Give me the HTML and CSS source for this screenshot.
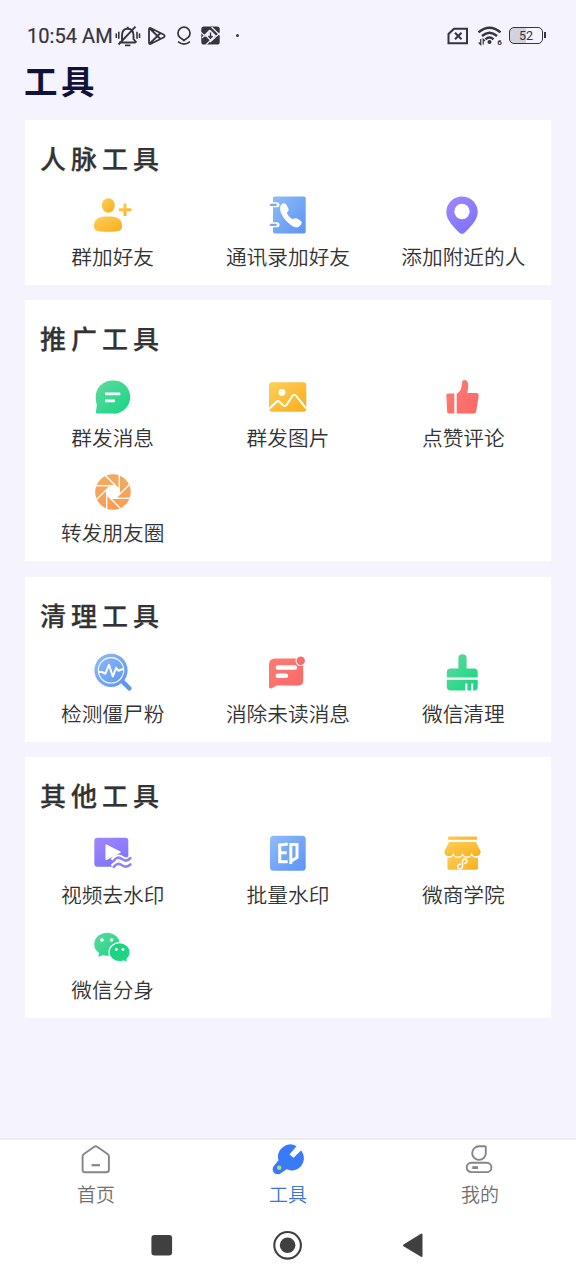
FILE: index.html
```html
<!DOCTYPE html>
<html lang="zh-CN">
<head>
<meta charset="utf-8">
<title>工具</title>
<link rel="stylesheet" href="styles.css">
</head>
<body>
<svg class="defs" width="0" height="0" aria-hidden="true">
  <defs>
    <linearGradient id="yellow" x1="0" y1="0" x2="1" y2="1"><stop offset="0" stop-color="#fdcf59"/><stop offset="1" stop-color="#f9ae1c"/></linearGradient>
    <linearGradient id="blue" x1="0" y1="0" x2="1" y2="1"><stop offset="0" stop-color="#8fbcf9"/><stop offset="1" stop-color="#5c93f5"/></linearGradient>
    <linearGradient id="purple" x1="0" y1="0" x2=".6" y2="1"><stop offset="0" stop-color="#a387fa"/><stop offset="1" stop-color="#7f74fb"/></linearGradient>
    <linearGradient id="green" x1="0" y1="0" x2="1" y2="1"><stop offset="0" stop-color="#62d8a0"/><stop offset="1" stop-color="#14d680"/></linearGradient>
    <linearGradient id="red" x1="0" y1="0" x2="1" y2="1"><stop offset="0" stop-color="#fb7d73"/><stop offset="1" stop-color="#fb6866"/></linearGradient>
    <linearGradient id="orange" x1="0" y1="0" x2="0" y2="1"><stop offset="0" stop-color="#f2ab63"/><stop offset="1" stop-color="#fb9c4f"/></linearGradient>
  </defs>
</svg>
<div class="screen">
  <header class="status">
    <span class="time">10:54 AM</span>
    <svg class="bell" width="26" height="22" viewBox="0 0 26 22" fill="none" stroke="#36343c" stroke-width="1.9">
      <path d="M4 17.5H20.5M7 16.5V10.5C7 5.5 9.5 3.7 12.7 3.7S18.5 5.5 18.5 10.5V14L21.5 17.5M12.7 3.7V1.8M10 20.4h5.4M3.5 19.5 20.5 1.7"/><path d="M1.3 8.5v4.5M3.8 6.8v7M22 6.8v7M24.5 8.5v4.5" stroke-width="1.6"/>
    </svg>
    <svg class="play" width="18" height="20" viewBox="0 0 18 20" fill="none" stroke="#36343c" stroke-width="1.8" stroke-linejoin="round">
      <path d="M2 1.8 16 8.8Q17.3 10 16 11.2L2 18.2Q1 18 1 16.8V3.2Q1 2 2 1.8ZM1.8 2.5 12.5 13M1.8 17.5 12.5 7"/>
    </svg>
    <svg class="balloon" width="16" height="20" viewBox="0 0 16 20" fill="none" stroke="#36343c" stroke-width="1.7">
      <path d="M8 14.5 3.6 11.2A6 6 0 1 1 12.4 11.2ZM2 15.6Q8 20.5 14 15.6"/>
    </svg>
    <svg class="tile-mark" width="19" height="19" viewBox="0 0 19 19">
      <rect x=".3" y=".5" width="18.4" height="18" rx="2.6" fill="#36343c"/><path d="M0 6.5 4.5 10.5M10.5 1 18.8 9M18.8 7 9 16M5 18.7 12.5 11.5M1 12 9 4" stroke="#f3f2fd" stroke-width="1.2"/><path d="M9.5 4 15 9.5 9.5 15 4 9.5Z" fill="#f3f2fd"/><path d="M9.5 6.5V12M7.4 10 9.5 12.2 11.6 10" fill="none" stroke="#36343c" stroke-width="1.4"/>
    </svg>
    <span class="dot"></span>
    <svg class="sim" width="22" height="18" viewBox="0 0 22 18" fill="none" stroke="#36343c" stroke-width="2">
      <path d="M7 1.7H20V16.2H1.5V7ZM8 5.8 14.5 12.3M14.5 5.8 8 12.3"/>
    </svg>
    <svg class="wifi" width="26" height="20" viewBox="0 0 26 20" fill="none" stroke="#36343c" stroke-width="2.4">
      <path d="M1.5 6.3Q12.5-3 23.5 6.3M5 10Q12.5 3.4 20 10M8.5 13.3Q12.5 9.7 16.5 13.3"/><circle cx="12.5" cy="16" r="2" fill="#36343c" stroke="none"/><path d="M3.7 13v5.5L1.7 16.5M6.2 18.5V13.2L8 15" stroke-width="1.2"/><text x="20.2" y="19" class="wifi-gen">6</text>
    </svg>
    <span class="battery">52</span>
  </header>
  <h1 class="page-title">工具</h1>

  <main class="cards">
    <section class="card">
      <h2>人脉工具</h2>
      <div class="grid">
        <div class="tool"><svg viewBox="0 0 40 40"><g fill="url(#yellow)"><ellipse cx="15.3" cy="10.5" rx="6.4" ry="7.3"/><path d="M1 31.5C1 24 5 21.5 15 21.5S29 24 29 31.5C29 35.5 26 36.8 15 36.8S1 35.5 1 31.5Z"/><path d="M30.5 8.6h3v4.7h4.7v3h-4.7v4.7h-3v-4.7h-4.7v-3h4.7Z"/></g></svg><span>群加好友</span></div>
        <div class="tool"><svg viewBox="0 0 40 40"><rect x="5" y="1.5" width="32.7" height="37" rx="1.8" fill="url(#blue)"/><path d="M4 9.8h5M4 29.8h5" stroke="#fff" stroke-width="5" stroke-linecap="round"/><path d="M2.8 9.8h5M2.8 29.8h5" stroke="#78a7f7" stroke-width="2.3" stroke-linecap="round"/><path d="M13.2 9.8Q16 7 18.2 9.6L20.6 14Q21.2 16 18.8 17.8Q20 21.7 24.6 24.2Q27.3 22.5 29 23.5L33 26Q34.5 27.3 33 29.8Q29.5 34.5 24.3 31Q16.5 26.2 12.8 17.5Q11.2 12.5 13.2 9.8Z" fill="#fff"/></svg><span>通讯录加好友</span></div>
        <div class="tool"><svg viewBox="0 0 40 40"><path fill="url(#purple)" fill-rule="evenodd" d="M19 1.5A15.7 15.7 0 0 1 34.7 17.2C34.7 25 27 32.5 21.2 38Q19 39.7 16.8 38C11 32.5 3.3 25 3.3 17.2A15.7 15.7 0 0 1 19 1.5ZM19 8.8A7.7 7.7 0 1 0 19 24.2A7.7 7.7 0 1 0 19 8.8Z"/></svg><span>添加附近的人</span></div>
      </div>
    </section>

    <section class="card">
      <h2>推广工具</h2>
      <div class="grid">
        <div class="tool"><svg viewBox="0 0 40 40"><path d="M19.3 4.5A16.6 16.6 0 1 1 19.3 37.6H4Q2.7 37.6 2.9 36.2L3.8 29Q2.7 25 2.7 21A16.6 16.6 0 0 1 19.3 4.5Z" fill="url(#green)"/><path d="M12 17.8H27.3M12 24.8H22" stroke="#fff" stroke-width="2.7"/></svg><span>群发消息</span></div>
        <div class="tool"><svg viewBox="0 0 40 40"><rect x="1" y="6.2" width="37.3" height="29.6" rx="3" fill="url(#yellow)"/><circle cx="14" cy="16.5" r="3.4" fill="#fff"/><path d="M1 33 8.2 26Q10 24.2 11.8 26L15 29.3Q17 31 18.7 28.7L24.5 19.8Q26.3 17.5 28.2 20L38.3 32.6" stroke="#fff" stroke-width="2" fill="none"/></svg><span>群发图片</span></div>
        <div class="tool"><svg viewBox="0 0 40 40" fill="url(#red)"><path d="M5 17.5H11.3V37.5H5.8Q4.3 37.5 4.2 36L3.3 19.3Q3.3 17.5 5 17.5ZM13.7 17.8Q18.8 15 19 7.5Q19 4 21.5 4.1C25.5 4.4 26.3 9 24.2 17H33.8Q36 17.2 35.7 19.5L33.2 35.5Q32.8 37.5 31 37.5H13.7Z"/></svg><span>点赞评论</span></div>
        <div class="tool"><svg viewBox="0 0 40 40"><g transform="translate(20 21)"><circle r="17.8" fill="url(#orange)"/><path fill="#fff" d="M6.3-2.6V2.6L2.6 6.3H-2.6L-6.3 2.6V-2.6L-2.6-6.3H2.6Z"/><g stroke="#fff" stroke-width="1.4"><path d="M6.3 3V-17"/><path d="M6.3 3V-17" transform="rotate(45)"/><path d="M6.3 3V-17" transform="rotate(90)"/><path d="M6.3 3V-17" transform="rotate(135)"/><path d="M6.3 3V-17" transform="rotate(180)"/><path d="M6.3 3V-17" transform="rotate(225)"/><path d="M6.3 3V-17" transform="rotate(270)"/><path d="M6.3 3V-17" transform="rotate(315)"/></g></g></svg><span>转发朋友圈</span></div>
      </div>
    </section>

    <section class="card">
      <h2>清理工具</h2>
      <div class="grid">
        <div class="tool"><svg viewBox="0 0 40 40" fill="none"><path d="M28 28 36.4 36.4" stroke="#5d95f3" stroke-width="4.4" stroke-linecap="round"/><circle cx="18" cy="18.3" r="16.6" fill="url(#blue)"/><circle cx="18" cy="18.3" r="12.7" stroke="#fff" stroke-width="1.1"/><path d="M6 20H9L12.3 21.7 16 12.8 19.8 24.5 23.2 15.8 25.3 18.8 30 17" stroke="#fff" stroke-width="2" stroke-linejoin="round"/></svg><span>检测僵尸粉</span></div>
        <div class="tool"><svg viewBox="0 0 40 40"><path d="M7 6.5H30Q35.2 6.5 35.2 11.5V28.5Q35.2 33.5 30 33.5H8.5L3.3 36.5Q1 37 1 34.5V12.5Q1 6.5 7 6.5Z" fill="url(#red)"/><circle cx="32.7" cy="8.8" r="5.2" fill="#fff"/><circle cx="32.7" cy="8.8" r="4.2" fill="#fb6c69"/><path d="M9.8 15.5H27M9.8 23.8H18" stroke="#fff" stroke-width="4.4" stroke-linecap="round"/></svg><span>消除未读消息</span></div>
        <div class="tool"><svg viewBox="0 0 40 40" fill="url(#green)"><path d="M15.4 16.5V6.3Q15.4 2.2 19.5 2.2T23.6 6.3V16.5H31Q34.7 16.5 34.7 20.2V25.5H3.8V20.2Q3.8 16.5 7.5 16.5ZM3.8 27.8H34.7V34.8Q34.7 38.5 31 38.5H30.2V31.5H28V38.5H24.4V31.5H22.2V38.5H7.5Q3.8 38.5 3.8 34.8Z"/></svg><span>微信清理</span></div>
      </div>
    </section>

    <section class="card">
      <h2>其他工具</h2>
      <div class="grid">
        <div class="tool"><svg viewBox="0 0 40 40" fill="none"><rect x="1.3" y="4.8" width="34" height="29" rx="3" fill="url(#purple)"/><path d="M13.2 12.2 27 19.1 13.2 26.3Z" fill="#fff" stroke="#fff" stroke-width="1.5" stroke-linejoin="round"/><path d="M20 27.8Q24.3 22.6 29 26T38 25.2M20 34Q24.3 28.8 29 32.2T38 31.4" stroke="#fff" stroke-width="6"/><path d="M20.8 27.8Q24.3 22.6 29 26T37.4 25.2M20.8 34Q24.3 28.8 29 32.2T37.4 31.4" stroke="#9181f7" stroke-width="2.6" stroke-linecap="round"/></svg><span>视频去水印</span></div>
        <div class="tool"><svg viewBox="0 0 40 40" fill="none"><rect x="2" y="2.8" width="35.7" height="35" rx="3.5" fill="url(#blue)"/><g stroke="#fff" stroke-width="3"><path d="M19.7 11 11.7 12V28.8H19.7M11.7 19.8H18.7M22.8 31V11.5H29V24.5L23 28.2"/></g></svg><span>批量水印</span></div>
        <div class="tool"><svg viewBox="0 0 40 40"><g fill="url(#yellow)"><rect x="5" y="3.6" width="29" height="3.2" rx=".8"/><path d="M6 9H33L37.7 18.5A4.6 4.6 0 0 1 28.6 19.5 4.6 4.6 0 0 1 19.5 19.5 4.6 4.6 0 0 1 10.4 19.5 4.6 4.6 0 0 1 1.3 18.5Z"/><path d="M4.4 24.7Q8 25.5 10.5 22.5 15 27.7 19.5 22.5 24 27.7 28.5 22.5 31 25.5 35 24.7V35Q35 36.8 33.2 36.8H6.2Q4.4 36.8 4.4 35Z"/></g><path d="M17.5 31.2A2.4 2.4 0 1 0 19.5 33.5V28.5A2.2 2.2 0 1 1 21.7 30.5" fill="none" stroke="#fff" stroke-width="1.5" stroke-linecap="round"/></svg><span>微商学院</span></div>
        <div class="tool"><svg viewBox="0 0 40 40"><path d="M14 4.7C21.2 4.7 26.8 9.7 26.8 16.2S21.2 27.7 14 27.7Q11.8 27.7 9.8 27L5.5 29 6 24.9Q1.2 21.5 1.2 16.2C1.2 9.7 6.8 4.7 14 4.7Z" fill="url(#green)"/><path d="M26.6 14.6C32.5 14.6 37.2 18.9 37.2 24.2Q37.2 28 34 31.2L34.3 34.8 30.5 33Q28.6 33.7 26.6 33.7C20.7 33.7 16 29.5 16 24.2S20.7 14.6 26.6 14.6Z" fill="#1bd583" stroke="#fff" stroke-width="1.3"/><g fill="#fff"><circle cx="9" cy="12" r="1.8"/><circle cx="18.6" cy="12" r="1.8"/><circle cx="23.3" cy="21.5" r="1.4"/><circle cx="30" cy="21.5" r="1.4"/></g></svg><span>微信分身</span></div>
      </div>
    </section>
  </main>

  <nav class="tabs">
    <a class="tab"><svg viewBox="0 0 32 32" fill="none" stroke="#858585" stroke-width="1.9" stroke-linejoin="round"><path d="M14.3 3.8Q15.7 2.8 17.1 3.8L27.6 11Q28.9 12 28.9 13.5V26.8Q28.9 29.2 26.5 29.2H5Q2.6 29.2 2.6 26.8V13.5Q2.6 12 3.9 11Z"/><path d="M11.6 22.2H20" stroke-width="2.2"/></svg><span>首页</span></a>
    <a class="tab active"><svg viewBox="0 0 32 32"><path d="M24.5 3.2A12.3 12.3 0 0 0 6.5 17.2L2 22.8A4.8 4.8 0 0 0 9.5 29.7L14.6 26.3A12.2 12.2 0 0 0 30.2 9L29 7.5 21.5 14.8 17.5 11.6Z" fill="#387af8"/><circle cx="7.2" cy="24.7" r="2.2" fill="#b6de68"/></svg><span>工具</span></a>
    <a class="tab"><svg viewBox="0 0 32 32" fill="none" stroke="#858585" stroke-width="1.9"><path d="M15 3.3H20.5Q22 3.3 21.8 4.8V10A6.8 6.8 0 1 1 15 3.3Z"/><rect x="2.7" y="19.7" width="24.7" height="9.4" rx="4.7"/><path d="M8.3 24.6H14" stroke-width="2.8"/></svg><span>我的</span></a>
  </nav>
  <footer class="system-nav">
    <svg width="30" height="30" viewBox="0 0 30 30"><rect x="4.4" y="4.9" width="20.7" height="20.7" rx="3" fill="#404040"/></svg>
    <svg width="30" height="30" viewBox="0 0 30 30"><circle cx="14.6" cy="15.3" r="13.3" fill="none" stroke="#404040" stroke-width="2.1"/><circle cx="14.6" cy="15.3" r="7.8" fill="#404040"/></svg>
    <svg width="30" height="30" viewBox="0 0 30 30"><path d="M5 15.3 22.5 4.6V26Z" fill="#404040" stroke="#404040" stroke-width="2" stroke-linejoin="round"/></svg>
  </footer>
</div>
</body>
</html>
```
FILE: styles.css
```css
* { box-sizing: border-box; }
body {
  margin: 0;
  background: #f4f3fe;
  font-family: "Noto Sans CJK SC", "Noto Sans", sans-serif;
  color: #333;
}
.defs { position: absolute; }
.screen {
  display: flex;
  flex-direction: column;
  height: 1280px;
}
.status {
  display: flex;
  align-items: center;
  height: 59px;
  padding: 12px 33px 0 27px;
  color: #36343c;
}
.time {
  width: 88px;
  font: 400 20.1px/24px Roboto, sans-serif;
  white-space: nowrap;
  -webkit-text-stroke: 0.2px #36343c;
}
.status svg { flex: none; }
.play { margin-left: 7px; }
.balloon { margin-left: 10px; }
.tile-mark { margin-left: 9px; }
.dot {
  width: 3px;
  height: 3px;
  margin-left: 16px;
  border-radius: 50%;
  background: #36343c;
}
.sim { margin-left: auto; }
.wifi { margin-left: 8px; }
.wifi-gen {
  font: 700 8px Roboto, sans-serif;
  fill: #36343c;
  stroke: none;
}
.battery {
  position: relative;
  width: 34px;
  height: 17px;
  margin-left: 6px;
  border: 1.6px solid #36343c;
  border-radius: 5px;
  background: linear-gradient(90deg, #d3d2dc 50%, transparent 50%);
  font: 400 12.5px/15px Roboto, sans-serif;
  text-align: center;
}
.battery::after {
  content: "";
  position: absolute;
  right: -4px;
  top: 4px;
  width: 2px;
  height: 6px;
  background: #36343c;
}
.page-title {
  height: 60.7px;
  margin: 0;
  padding-left: 24px;
  color: #11113a;
  font-size: 33.5px;
  font-weight: 700;
  line-height: 42px;
  letter-spacing: 3.5px;
}
.cards {
  display: flex;
  flex: 1;
  flex-direction: column;
  gap: 15.2px;
  padding: 0 25px;
}
.card {
  padding: 18px 0 14px;
  background: #fff;
}
.card h2 {
  margin: 0 0 18.5px;
  padding-left: 15px;
  font-size: 26px;
  font-weight: 500;
  line-height: 39px;
  letter-spacing: 5px;
  -webkit-text-stroke: 0.25px #333;
}
.grid {
  display: grid;
  grid-template-columns: repeat(3, 1fr);
  row-gap: 19.6px;
}
.tool {
  display: flex;
  flex-direction: column;
  align-items: center;
  gap: 6px;
  font-size: 20.7px;
  font-weight: 350;
  line-height: 30px;
}
.tool svg {
  width: 40px;
  height: 40px;
}
.tabs {
  display: grid;
  grid-template-columns: repeat(3, 1fr);
  height: 72px;
  border-top: 2px solid #ececf0;
  background: #fff;
}
.tab {
  display: flex;
  flex-direction: column;
  align-items: center;
  padding-top: 3px;
  color: #707070;
  font-size: 19px;
  font-weight: 350;
  line-height: 28px;
}
.tab svg {
  width: 32px;
  height: 32px;
  margin-bottom: 5px;
}
.tab.active { color: #3d77cf; }
.system-nav {
  display: flex;
  justify-content: center;
  gap: 96px;
  height: 70px;
  padding-top: 20px;
  background: #fff;
}
```
